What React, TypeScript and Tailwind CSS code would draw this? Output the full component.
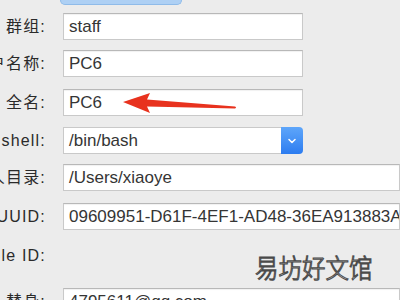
import { ChevronDown } from 'lucide-react';

const FONT = "font-['Helvetica','Liberation_Sans','Noto_Sans_CJK_SC',sans-serif]";

function Label({ text }: { text: string }) {
  return (
    <div className="w-[46px] shrink-0 flex justify-end">
      <span className="whitespace-nowrap text-[16px] tracking-[1.2px] text-[#2a2a2a]">{text}</span>
    </div>
  );
}

function Field({ value, wide }: { value: string; wide?: boolean }) {
  return (
    <div
      className={`h-[27px] flex items-center bg-white border border-[#c9c9c9] border-t-[#b8b8b8] shadow-[inset_0_1px_1px_rgba(0,0,0,0.06)] pl-[5px] whitespace-nowrap overflow-hidden ${
        wide ? 'w-[345px]' : 'w-[240px]'
      }`}
    >
      <span className="text-[17px] text-[#353535]">{value}</span>
    </div>
  );
}

export default function App() {
  return (
    <div className={`relative w-[400px] h-[300px] overflow-hidden bg-[#ececec] ${FONT}`}>
      {/* button peeking at top */}
      <div className="ml-[60px] w-[122px] h-[5px] rounded-b-[5px] bg-[#aed0f4] border border-t-0 border-[#8fbbe9]" />

      <div className="flex flex-col">
        <div className="flex items-center gap-[17px] mt-[8px]">
          <Label text="群组:" />
          <Field value="staff" />
        </div>
        <div className="flex items-center gap-[17px] mt-[10px]">
          <Label text="用户名称:" />
          <Field value="PC6" />
        </div>
        <div className="flex items-center gap-[17px] mt-[12px]">
          <Label text="全名:" />
          <Field value="PC6" />
        </div>
        <div className="flex items-center gap-[17px] mt-[11px]">
          <Label text="登录 shell:" />
          <div className="flex h-[27px]">
            <div className="w-[218px] flex items-center bg-white border border-[#c9c9c9] border-r-0 pl-[5px]">
              <span className="text-[17px] text-[#353535]">/bin/bash</span>
            </div>
            <div className="w-[22px] flex items-center justify-center rounded-r-[4px] bg-gradient-to-b from-[#5ea6fa] to-[#2c7cf0]">
              <ChevronDown size={12} strokeWidth={3} className="text-white" />
            </div>
          </div>
        </div>
        <div className="flex items-center gap-[17px] mt-[10px]">
          <Label text="个人目录:" />
          <Field value="/Users/xiaoye" wide />
        </div>
        <div className="flex items-center gap-[17px] mt-[12px]">
          <Label text="UUID:" />
          <Field value="09609951-D61F-4EF1-AD48-36EA913883AC" wide />
        </div>
        <div className="flex items-center gap-[17px] h-[27px] mt-[12px]">
          <Label text="Apple ID:" />
        </div>
        <div className="flex items-center gap-[17px] mt-[19px]">
          <Label text="替身:" />
          <Field value="4795611@qq.com" wide />
        </div>
      </div>

      {/* red arrow */}
      <svg className="absolute left-[120px] top-[90px]" width="120" height="28" viewBox="0 0 120 28">
        <path
          d="M3 12 L30 3 L27 9.5 L115 16.5 Q117 17.5 115 18.5 L27 16.5 L30 23 Z"
          fill="#e8321e"
        />
      </svg>

      {/* watermark */}
      <div className="absolute left-[255px] top-[254px] text-[23.5px] leading-none text-white font-['Noto_Sans_CJK_SC',sans-serif] font-light [-webkit-text-stroke:1px_#4a4a4a] origin-top scale-y-[1.12]">
        易坊好文馆
      </div>
    </div>
  );
}
